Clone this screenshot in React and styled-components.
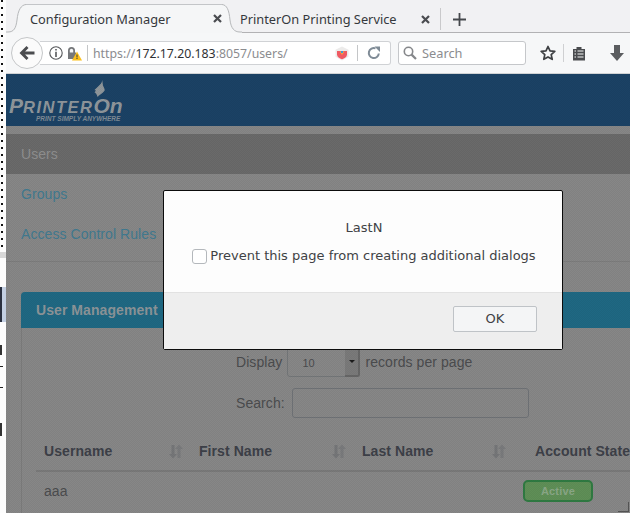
import React from 'react'
import styled, { createGlobalStyle } from 'styled-components'

const GlobalStyle = createGlobalStyle`
  html, body {
    margin: 0;
    padding: 0;
    background: #fff;
  }
`

const Screen = styled.div`
  position: relative;
  display: flex;
  width: 630px;
  height: 513px;
  overflow: hidden;
  font-family: 'Liberation Sans', Arial, sans-serif;
`

const LeftStrip = styled.div`
  display: flex;
  flex-direction: column;
  flex: 0 0 6px;
  background: #fdfdfd;
`

const StripPiece = styled.div`
  flex: 0 0 ${p => p.$h}px;
  width: ${p => p.$w || 2}px;
  background: ${p => p.$color || 'transparent'};
  ${p => p.$dotted && `
    margin-left: 1px;
    background: repeating-linear-gradient(#111 0 2px, transparent 2px 7px);
  `}
`

const Browser = styled.div`
  display: flex;
  flex-direction: column;
  flex: 1;
  min-width: 0;
`

const TabStrip = styled.div`
  display: flex;
  flex: none;
  align-items: stretch;
  height: 33px;
  background: #f1f1f3;
  font-family: 'Noto Sans', sans-serif;
  font-size: 12.8px;
  color: #35383c;
`

const TabCurve = styled.svg`
  flex: 0 0 20px;
  width: 20px;
  height: 33px;
`

const ActiveTab = styled.div`
  display: flex;
  align-items: center;
  flex: 0 0 196px;
  box-sizing: border-box;
  margin-top: 4px;
  padding: 0 0 1px 4px;
  border-top: 1px solid #c3c5c8;
  background: #f5f6f7;
`

const TabLabel = styled.span`
  flex: 1;
  white-space: nowrap;
`

const CloseMark = styled.svg`
  width: 9px;
  height: 9px;
  flex: none;
`

const RestTabs = styled.div`
  display: flex;
  flex: 1;
  align-items: center;
  box-sizing: border-box;
  padding-top: 6px;
  border-bottom: 1px solid #b2b2b4;
`

const OtherTab = styled.div`
  display: flex;
  align-items: center;
  flex: 0 0 200px;
  box-sizing: border-box;
  padding-right: 10px;
  margin-left: -2px;
`

const TabDivider = styled.div`
  width: 1px;
  height: 22px;
  background: #c9c9cb;
`

const PlusMark = styled.svg`
  width: 13px;
  height: 13px;
  margin-left: 12px;
`

const NavBar = styled.div`
  display: flex;
  flex: none;
  align-items: center;
  box-sizing: border-box;
  height: 41px;
  padding-left: 5px;
  background: #f6f7f8;
  border-bottom: 1px solid #d0d2d4;
  font-family: 'Noto Sans', sans-serif;
  font-size: 12.8px;
`

const BackButton = styled.div`
  position: relative;
  z-index: 1;
  display: flex;
  align-items: center;
  justify-content: center;
  box-sizing: border-box;
  flex: none;
  width: 32px;
  height: 32px;
  margin-right: -3px;
  border: 1px solid #c5c7c9;
  border-radius: 50%;
  background: #fbfbfb;
`

const UrlBox = styled.div`
  display: flex;
  align-items: center;
  box-sizing: border-box;
  flex: 0 0 351px;
  height: 24px;
  padding-left: 9px;
  background: #fff;
  border: 1px solid #d0d2d5;
  border-left: 0;
  border-radius: 0 3px 3px 0;
`

const UrlIcon = styled.svg`
  flex: none;
  margin-right: ${p => p.$gap || 0}px;
  margin-left: ${p => p.$left || 0}px;
`

const UrlDivider = styled.div`
  flex: none;
  width: 1px;
  height: 16px;
  margin: ${p => p.$margin};
  background: #c4c6c8;
`

const UrlText = styled.span`
  flex: 0 0 ${p => p.$w}px;
  white-space: nowrap;
  font-size: 12.3px;
  color: #8b8c8f;
  b {
    font-weight: 400;
    color: #2e3033;
  }
`

const SearchBox = styled.div`
  display: flex;
  align-items: center;
  gap: 5px;
  box-sizing: border-box;
  flex: 0 0 128px;
  height: 24px;
  margin-left: 7px;
  padding-left: 4px;
  background: #fff;
  border: 1px solid #c5c7ca;
  border-radius: 3px;
  color: #8b8c8f;
`

const ToolIcon = styled.svg`
  flex: none;
  margin-left: ${p => p.$left}px;
`

const ToolDivider = styled.div`
  flex: none;
  width: 1px;
  height: 18px;
  margin-left: 7px;
  background: #cfd0d2;
`

const Page = styled.div`
  position: relative;
  flex: 1;
  min-height: 0;
  overflow: hidden;
  background: #878787;
  color: #4b4c4e;
  font-size: 14px;
  letter-spacing: 0.07px;
`

const Dither = styled.div`
  position: absolute;
  inset: 0;
  background: repeating-conic-gradient(rgba(0, 0, 0, 0.045) 0 25%, transparent 0 50%) 0 0 / 2px 2px;
  pointer-events: none;
`

const Banner = styled.div`
  display: flex;
  height: 52px;
  background: #1b4265;
`

const Logo = styled.div`
  width: 118px;
  margin-left: 3px;
  color: #8f969b;
  font-style: italic;
  font-weight: 700;
  line-height: 1;
  letter-spacing: 0;
`

const LogoBird = styled.svg`
  display: block;
  width: 13px;
  height: 17px;
  margin: 6px 0 0 84px;
`

const LogoName = styled.div`
  font-size: 16.5px;
  letter-spacing: 1.5px;
  white-space: nowrap;
  margin-top: -2px;
  span {
    font-size: 21px;
    letter-spacing: 0;
  }
`

const LogoTagline = styled.div`
  font-size: 6.5px;
  white-space: nowrap;
  margin-left: 27px;
  color: #7f8b95;
`

const SideMenu = styled.div`
  margin-top: 8px;
  padding-bottom: 7px;
  border-bottom: 1px solid #7c7c7c;
`

const MenuItem = styled.div`
  box-sizing: border-box;
  height: 40px;
  padding: 11px 15px 0;
  line-height: 18px;
  color: ${p => (p.$active ? '#8f8f8f' : '#417a90')};
  background: ${p => (p.$active ? '#6a6a6a' : 'transparent')};
`

const Panel = styled.div`
  box-sizing: border-box;
  width: 640px;
  height: 230px;
  margin: 30px 0 0 15px;
  border-left: 1px solid #7b7b7b;
  border-radius: 4px 0 0 0;
`

const PanelHeader = styled.div`
  box-sizing: border-box;
  height: 36px;
  margin-left: -1px;
  padding: 9px 15px 0;
  line-height: 18px;
  background: #1f6883;
  border-radius: 4px 4px 0 0;
  color: #8c9498;
  font-weight: 700;
`

const ToolRow = styled.div`
  display: flex;
  align-items: center;
  height: 30px;
  margin-top: ${p => p.$top}px;
  padding-left: 214px;
`

const DisplaySelect = styled.div`
  position: relative;
  box-sizing: border-box;
  width: 73px;
  height: 30px;
  margin: 0 5px;
  padding: 8px 0 0 14px;
  border: 1px solid #737678;
  border-radius: 3px;
  font-size: 11px;
  line-height: 14px;
`

const SelectHandle = styled.div`
  position: absolute;
  top: 0;
  right: -1px;
  bottom: -1px;
  display: flex;
  align-items: center;
  justify-content: center;
  box-sizing: border-box;
  width: 15px;
  background: #7a7a7a;
  border-right: 2px solid #666;
  border-bottom: 2px solid #666;
  border-radius: 0 0 3px 0;
  &::after {
    content: '';
    border: 3px solid transparent;
    border-top: 3px solid #1c1c1c;
    border-bottom: 0;
  }
`

const SearchField = styled.div`
  box-sizing: border-box;
  width: 237px;
  height: 30px;
  margin-left: 7px;
  border: 1px solid #6f7276;
  border-radius: 3px;
`

const TableHead = styled.div`
  display: grid;
  grid-template-columns: 155px 163px 173px 120px;
  height: 40px;
  margin: 14px 0 0 14px;
  border-bottom: 2px solid #797979;
  box-sizing: border-box;
  color: #3d4048;
  font-weight: 700;
`

const HeadCell = styled.div`
  display: flex;
  align-items: center;
  justify-content: space-between;
  padding: 0 ${p => p.$right || 8}px 0 8px;
  white-space: nowrap;
`

const SortIcon = styled.svg`
  flex: none;
  width: 14px;
  height: 15px;
`

const TableRow = styled.div`
  display: grid;
  grid-template-columns: 155px 163px 173px 120px;
  align-items: center;
  height: 38px;
  margin-left: 14px;
`

const BodyCell = styled.div`
  padding-left: 8px;
`

const Badge = styled.div`
  box-sizing: border-box;
  width: 70px;
  height: 22px;
  margin-left: -4px;
  border: 2px solid #2f7a42;
  border-radius: 5px;
  background: #5f8f57;
  color: #8aa786;
  font-size: 11px;
  font-weight: 700;
  line-height: 18px;
  text-align: center;
  letter-spacing: 0.2px;
`

const CornerMark = styled.div`
  position: absolute;
  right: 1px;
  bottom: 1px;
  width: 11px;
  height: 10px;
  box-sizing: border-box;
  border-bottom: 1px solid #555;
  &::after {
    content: '';
    position: absolute;
    top: 0;
    right: 0;
    width: 1px;
    height: 10px;
    background: #555;
  }
`

const Dialog = styled.div`
  position: absolute;
  left: 163px;
  top: 190px;
  display: flex;
  flex-direction: column;
  box-sizing: border-box;
  width: 400px;
  height: 160px;
  background: #fdfdfd;
  border: 1px solid #0c0c0c;
  border-radius: 2px;
  font-family: 'DejaVu Sans', sans-serif;
  font-size: 13px;
  color: #3f4245;
`

const DialogBody = styled.div`
  display: flex;
  flex-direction: column;
  align-items: center;
  box-sizing: border-box;
  height: 102px;
  padding: 28px 0 0 2px;
  border-bottom: 1px solid #e2e2e2;
`

const DialogMessage = styled.div`
  line-height: 18px;
`

const CheckRow = styled.div`
  display: flex;
  align-items: center;
  gap: 3px;
  margin-top: 10px;
  line-height: 18px;
  white-space: nowrap;
`

const CheckBox = styled.div`
  box-sizing: border-box;
  width: 15px;
  height: 15px;
  border: 1px solid #b4b8bc;
  border-radius: 3px;
  background: #fff;
`

const DialogFooter = styled.div`
  display: flex;
  justify-content: flex-end;
  flex: 1;
  padding: 13px 25px 0 0;
  background: #eeeeee;
`

const OkButton = styled.div`
  box-sizing: border-box;
  width: 84px;
  height: 26px;
  border: 1px solid #bfc3c7;
  border-radius: 2px;
  background: #f4f5f6;
  line-height: 24px;
  text-align: center;
`

const Cross = () => (
  <CloseMark viewBox="0 0 9 9">
    <path d="M1 1l7 7M8 1l-7 7" stroke="#4a4c50" strokeWidth="2.2" fill="none" />
  </CloseMark>
)

const Sort = () => (
  <SortIcon viewBox="0 0 14 15">
    <path d="M2.500 1h3v9H8L4 14.500 0 10h2.500z" fill="#757678" />
    <path d="M8.500 14V5H6L10 .5 14 5h-2.500v9z" fill="#797a7c" />
  </SortIcon>
)

function TabBar() {
  return (
    <TabStrip>
      <TabCurve viewBox="0 0 20 33">
        <path d="M0 33V32H2C8 32 10 28 11 20C12 10 15 5 20 5V33Z" fill="#f5f6f7" />
        <path d="M0 32H2C8 32 10 28 11 20C12 10 15 5 20 4.5" fill="none" stroke="#b6b8ba" />
      </TabCurve>
      <ActiveTab>
        <TabLabel>Configuration Manager</TabLabel>
        <Cross />
      </ActiveTab>
      <TabCurve viewBox="0 0 20 33">
        <path d="M0 5C5 5 7 10 8 20C9 28 12 32 18 32H20V33H0Z" fill="#f5f6f7" />
        <path d="M0 4.500C5 5 7 10 8 20C9 28 12 32 18 32H20" fill="none" stroke="#b6b8ba" />
      </TabCurve>
      <RestTabs>
        <OtherTab>
          <TabLabel>PrinterOn Printing Service</TabLabel>
          <Cross />
        </OtherTab>
        <TabDivider />
        <PlusMark viewBox="0 0 13 13">
          <path d="M6.500 0v13M0 6.500h13" stroke="#45484c" strokeWidth="1.8" />
        </PlusMark>
      </RestTabs>
    </TabStrip>
  )
}

function Toolbar() {
  return (
    <NavBar>
      <BackButton>
        <svg width="16" height="14" viewBox="0 0 16 14">
          <path d="M7.500 0L0.500 7l7 7 2-2-3.400-3.400H15.500V5.400H6.100L9.500 2z" fill="#4b4c4f" />
        </svg>
      </BackButton>
      <UrlBox>
        <UrlIcon width="14" height="14" viewBox="0 0 14 14" $gap={4}>
          <circle cx="7" cy="7" r="6.200" fill="none" stroke="#55575a" strokeWidth="1.1" />
          <path d="M6.200 3h1.600v1.600H6.200zM6.200 5.800h1.600V11H6.200z" fill="#55575a" />
        </UrlIcon>
        <UrlIcon width="15" height="15" viewBox="0 0 15 15" $gap={5}>
          <path d="M1 6.500V4.500a3.500 3.500 0 0 1 7 0v2h1v6.500H1z" fill="#75777a" />
          <path d="M2.800 6.500V4.500a1.700 1.700 0 0 1 3.400 0v2z" fill="#f6f7f8" />
          <path d="M10 5.500l5 9H5z" fill="#fbbf1c" />
          <path d="M9.500 8.500h1v3h-1zM9.500 12h1v1h-1z" fill="#3a3a3a" />
        </UrlIcon>
        <UrlDivider $margin="0 5px 0 0" />
        <UrlText $w={242}>https://<b>172.17.20.183</b>:8057/users/</UrlText>
        <UrlIcon width="14" height="15" viewBox="0 0 14 15">
          <path d="M7 0.500l6.500 3.200v7L7 14.500l-6.500-3.800v-7z" fill="#ecebea" />
          <path d="M2 5h10v3.500C12 11 9.500 12.600 7 13.200 4.500 12.600 2 11 2 8.500z" fill="#ef5a63" />
          <path d="M4.500 5.500h5L7 9z" fill="#f7a93b" />
          <path d="M6 5h2v2H6z" fill="#3d9bd8" />
        </UrlIcon>
        <UrlDivider $margin="0 0 0 8px" />
        <UrlIcon width="14" height="14" viewBox="0 0 14 14" $left={9}>
          <path d="M11.800 7.500A5 5 0 1 1 8.500 2.400" fill="none" stroke="#7f8b96" strokeWidth="2" />
          <path d="M7.500 0.500l5.500 0v5.500z" fill="#7f8b96" />
        </UrlIcon>
      </UrlBox>
      <SearchBox>
        <svg width="14" height="14" viewBox="0 0 14 14">
          <circle cx="5.500" cy="5.500" r="4.200" fill="none" stroke="#85878a" strokeWidth="1.6" />
          <path d="M8.600 8.600L13 13" stroke="#85878a" strokeWidth="2.2" />
        </svg>
        Search
      </SearchBox>
      <ToolIcon width="16" height="16" viewBox="0 0 16 16" $left={14}>
        <path d="M8 1.500l2 4.400 4.800.5-3.600 3.200 1 4.700L8 11.900l-4.200 2.400 1-4.700L1.200 6.400l4.800-.5z" fill="none" stroke="#3e4043" strokeWidth="1.7" strokeLinejoin="round" />
      </ToolIcon>
      <ToolDivider />
      <ToolIcon width="14" height="15" viewBox="0 0 14 15" $left={8}>
        <path d="M1 3h3.500V1h5v2H13v11.500H1z" fill="#4a4c4f" />
        <path d="M5.500 5h6M5.500 8h6M5.500 11h6M2.500 5h1.500M2.500 8h1.500M2.500 11h1.500" stroke="#f6f7f8" strokeWidth="1.2" />
      </ToolIcon>
      <ToolIcon width="14" height="16" viewBox="0 0 14 16" $left={24}>
        <path d="M4 0h6v8h4l-7 8-7-8h4z" fill="#5b5d60" />
      </ToolIcon>
    </NavBar>
  )
}

function Content() {
  return (
    <Page>
      <Banner>
        <Logo>
          <LogoBird viewBox="0 0 15 22">
            <path d="M11 0C11 4 8 6 6 8L1 13 3 14 1 16C3 17 4 19 5 22 7 19 11 18 14 14 15 12 13 10 12 7Z" fill="#8f969b" />
          </LogoBird>
          <LogoName><span>P</span>RINTER<span>On</span></LogoName>
          <LogoTagline>PRINT SIMPLY ANYWHERE</LogoTagline>
        </Logo>
      </Banner>
      <SideMenu>
        <MenuItem $active>Users</MenuItem>
        <MenuItem>Groups</MenuItem>
        <MenuItem>Access Control Rules</MenuItem>
      </SideMenu>
      <Panel>
        <PanelHeader>User Management</PanelHeader>
        <ToolRow $top={19}>
          Display
          <DisplaySelect>
            10
            <SelectHandle />
          </DisplaySelect>
          records per page
        </ToolRow>
        <ToolRow $top={11}>
          Search:
          <SearchField />
        </ToolRow>
        <TableHead>
          <HeadCell>Username<Sort /></HeadCell>
          <HeadCell>First Name<Sort /></HeadCell>
          <HeadCell $right={21}>Last Name<Sort /></HeadCell>
          <HeadCell>Account State</HeadCell>
        </TableHead>
        <TableRow>
          <BodyCell>aaa</BodyCell>
          <BodyCell />
          <BodyCell />
          <Badge>Active</Badge>
        </TableRow>
      </Panel>
      <CornerMark />
      <Dither />
    </Page>
  )
}

export default function App() {
  return (
    <Screen>
      <GlobalStyle />
      <LeftStrip>
        <StripPiece $h={250} $dotted />
        <StripPiece $h={2} />
        <StripPiece $h={6} $w={6} $color="#d8d8d8" />
        <StripPiece $h={29} />
        <StripPiece $h={35} $w={6} $color="linear-gradient(90deg, #2a3040 0 2px, #c3cfe2 2px)" />
        <StripPiece $h={23} />
        <StripPiece $h={10} $w={2} $color="#333" />
        <StripPiece $h={11} />
        <StripPiece $h={1} $w={3} $color="#222" />
        <StripPiece $h={20} />
        <StripPiece $h={1} $w={3} $color="#222" />
        <StripPiece $h={35} />
        <StripPiece $h={13} $w={2} $color="#333" />
      </LeftStrip>
      <Browser>
        <TabBar />
        <Toolbar />
        <Content />
      </Browser>
      <Dialog>
        <DialogBody>
          <DialogMessage>LastN</DialogMessage>
          <CheckRow>
            <CheckBox />
            Prevent this page from creating additional dialogs
          </CheckRow>
        </DialogBody>
        <DialogFooter>
          <OkButton>OK</OkButton>
        </DialogFooter>
      </Dialog>
    </Screen>
  )
}
